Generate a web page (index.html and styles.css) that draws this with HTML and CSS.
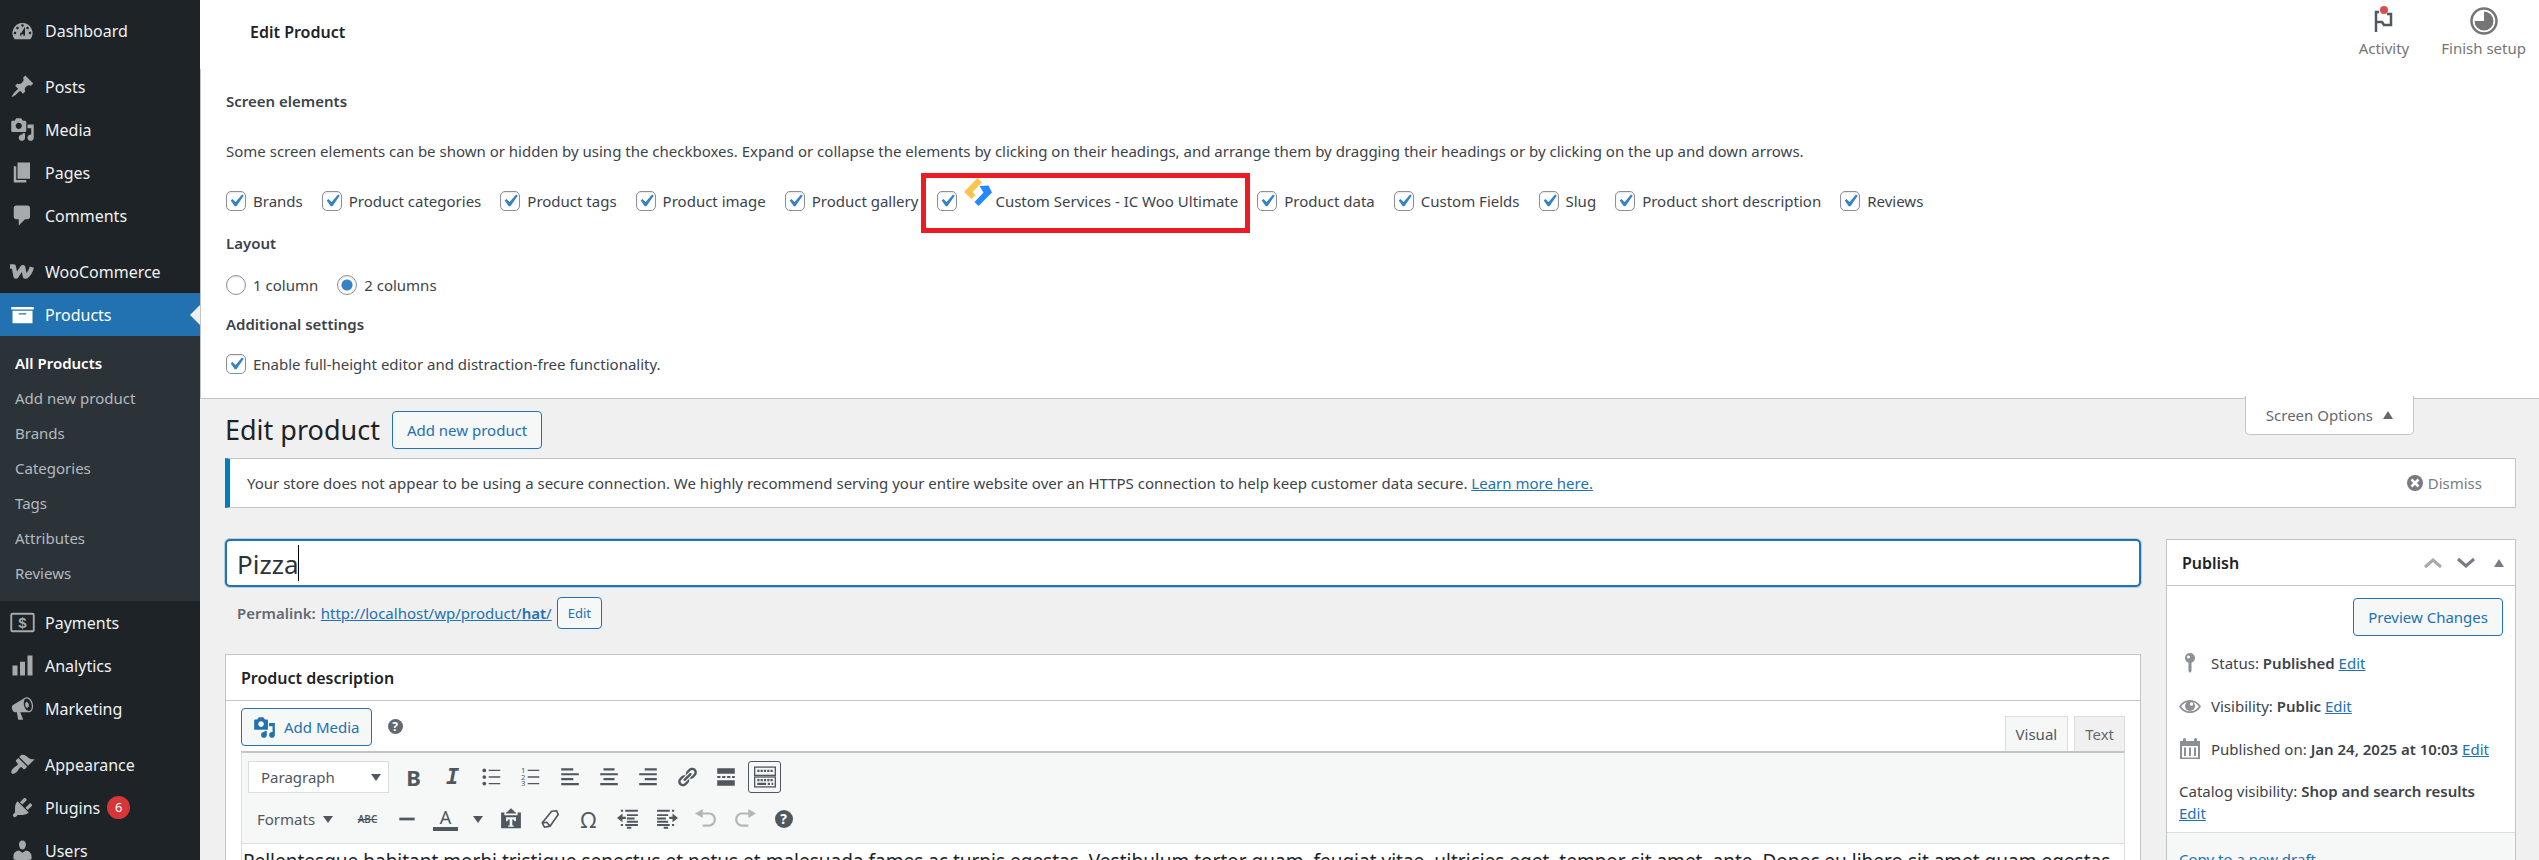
FILE: index.html
```html
<!DOCTYPE html>
<html lang="en">
<head>
  <meta charset="UTF-8" />
  <meta name="viewport" content="width=device-width, initial-scale=1.0"/>
  <title>Edit product</title>
  <link rel="stylesheet" href="styles.css">
</head>

<body>
  <!-- Admin menu -->
  <nav class="menu">
    <a class="menu-item" href="#">
      <svg class="icon" viewBox="0 0 20 20"><path d="M3.76 17h12.48A7.998 7.998 0 0 0 10 3.99 7.998 7.998 0 0 0 3.76 17zM10 5c.55 0 1 .45 1 1s-.45 1-1 1-1-.45-1-1 .45-1 1-1zM6 7c.55 0 1 .45 1 1s-.45 1-1 1-1-.45-1-1 .45-1 1-1zm8 0c.55 0 1 .45 1 1s-.45 1-1 1-1-.45-1-1 .45-1 1-1zm-5.37 5.55L12 7v6c0 1.1-.9 2-2 2s-2-.9-2-2c0-.57.24-1.08.63-1.45zM4 11c.55 0 1 .45 1 1s-.45 1-1 1-1-.45-1-1 .45-1 1-1zm12 0c.55 0 1 .45 1 1s-.45 1-1 1-1-.45-1-1 .45-1 1-1zm-5 3c0-.55-.45-1-1-1s-1 .45-1 1 .45 1 1 1 1-.45 1-1z"/></svg>
      Dashboard
    </a>
    <div class="menu-sep"></div>
    <a class="menu-item" href="#">
      <svg class="icon" viewBox="0 0 20 20"><path d="M10.44 3.02l1.82-1.82 6.36 6.35-1.83 1.82c-1.05-.68-2.48-.57-3.41.36l-.75.75c-.92.93-1.04 2.35-.35 3.41l-1.83 1.82-2.41-2.41-2.8 2.79c-.42.42-3.38 2.71-3.8 2.29s1.86-3.39 2.28-3.81l2.79-2.79L4.1 9.36l1.83-1.82c1.05.69 2.48.57 3.4-.36l.75-.75c.93-.92 1.05-2.35.36-3.41z"/></svg>
      Posts
    </a>
    <a class="menu-item" href="#">
      <svg class="icon" viewBox="0 0 20 20"><path d="M13 11V4c0-.55-.45-1-1-1h-1.67L9 1H5L3.67 3H2c-.55 0-1 .45-1 1v7c0 .55.45 1 1 1h10c.55 0 1-.45 1-1zM7 4.5c1.38 0 2.5 1.12 2.5 2.5S8.38 9.5 7 9.5 4.5 8.38 4.5 7 5.62 4.5 7 4.5zM14 6h5v10.5c0 1.38-1.12 2.5-2.5 2.5S14 17.88 14 16.5s1.12-2.5 2.5-2.5c.17 0 .34.02.5.05V9h-3V6zm-4 8.05V13h2v3.5c0 1.38-1.12 2.5-2.5 2.5S7 17.88 7 16.5 8.12 14 9.5 14c.17 0 .34.02.5.05z"/></svg>
      Media
    </a>
    <a class="menu-item" href="#">
      <svg class="icon" viewBox="0 0 20 20"><path d="M6 15V2h10v13H6zm-1 1h8v2H3V5h2v11z"/></svg>
      Pages
    </a>
    <a class="menu-item" href="#">
      <svg class="icon" viewBox="0 0 20 20"><path d="M5 2h9c1.1 0 2 .9 2 2v7c0 1.1-.9 2-2 2h-2l-5 5v-5H5c-1.1 0-2-.9-2-2V4c0-1.1.9-2 2-2z"/></svg>
      Comments
    </a>
    <div class="menu-sep"></div>
    <a class="menu-item" href="#">
      <svg class="icon woo" viewBox="0 0 20 20"><path d="M0 6h3l1.5 8h.5l5-7.500h.5l1.5 7.500h1c2-1.500 3.500-4 4.500-7.500"/></svg>
      WooCommerce
    </a>
    <a class="menu-item current" href="#">
      <svg class="icon" viewBox="0 0 20 20"><path d="M19 4v2H1V4h18zM2 7h16v10H2V7zm11 3V9H7v1h6z"/></svg>
      Products
    </a>
    <div class="submenu">
      <a class="active" href="#">All Products</a>
      <a href="#">Add new product</a>
      <a href="#">Brands</a>
      <a href="#">Categories</a>
      <a href="#">Tags</a>
      <a href="#">Attributes</a>
      <a href="#">Reviews</a>
    </div>
    <a class="menu-item" href="#">
      <svg class="icon" viewBox="0 0 20 20"><rect x="1" y="3" width="18" height="14" rx="1" fill="none" stroke="#a7aaad" stroke-width="1.5"/><text class="icon-text" x="10" y="14" font-size="12">$</text></svg>
      Payments
    </a>
    <a class="menu-item" href="#">
      <svg class="icon" viewBox="0 0 20 20"><path d="M18 18V2h-4v16h4zm-6 0V7H8v11h4zm-6 0v-8H2v8h4z"/></svg>
      Analytics
    </a>
    <a class="menu-item" href="#">
      <svg class="icon" viewBox="0 0 20 20"><path d="M18.15 5.94c.46 1.62.38 3.22-.02 4.48-.42 1.28-1.26 2.18-2.3 2.48-.16.06-.26.06-.4.06-.06.02-.12.02-.18.02-.06.02-.14.02-.22.02h-6.8l2.22 5.5c.02.14-.06.26-.14.34-.08.1-.24.16-.34.16H6.95c-.1 0-.26-.06-.34-.16-.08-.08-.16-.2-.14-.34l-1-5.5H4.25l-.02-.02c-.5.06-1.08-.18-1.54-.62s-.88-1.08-1.06-1.88c-.24-.8-.2-1.56-.02-2.2.18-.62.58-1.08 1.06-1.3l.02-.02 9-5.4c.1-.06.18-.1.24-.16.06-.04.14-.08.24-.12.16-.08.28-.12.5-.18 1.04-.3 2.24.1 3.22.98s1.84 2.24 2.26 3.86zm-2.58 5.98h-.02c.4-.1.74-.34 1.04-.7.58-.7.86-1.76.86-3.04 0-.64-.1-1.3-.28-1.98-.34-1.36-1.02-2.5-1.78-3.24s-1.68-1.1-2.46-.88c-.82.22-1.4.96-1.7 2-.32 1.04-.28 2.36.06 3.72.38 1.36 1 2.5 1.8 3.24.78.74 1.62 1.1 2.48.88zm-2.54-7.08c.22-.04.42-.02.62.04.38.16.76.48 1.02 1s.42 1.2.42 1.78c0 .3-.04.56-.12.8-.18.48-.44.84-.86.94-.34.1-.8-.06-1.14-.4s-.64-.86-.78-1.5c-.18-.62-.12-1.24.02-1.72s.48-.84.82-.94z"/></svg>
      Marketing
    </a>
    <div class="menu-sep"></div>
    <a class="menu-item" href="#">
      <svg class="icon" viewBox="0 0 20 20"><path d="M14.48 11.06L7.41 3.99l1.5-1.5c.5-.56 2.3-.47 3.51.32 1.21.8 1.43 1.28 2.91 2.1 1.18.64 2.45 1.26 4.45.85zm-.71.71L6.7 4.7 4.93 6.47c-.39.39-.39 1.02 0 1.41l1.06 1.06c.39.39.39 1.03 0 1.42-.6.6-1.43 1.11-2.21 1.69-.35.26-.7.53-1.01.84C1.43 14.23.4 16.08 1.4 17.07c.99 1 2.84-.03 4.18-1.36.31-.31.58-.66.85-1.02.57-.78 1.08-1.61 1.69-2.21.39-.39 1.02-.39 1.41 0l1.06 1.06c.39.39 1.02.39 1.41 0z"/></svg>
      Appearance
    </a>
    <a class="menu-item" href="#">
      <svg class="icon" viewBox="0 0 20 20"><path d="M13.11 4.36L9.87 7.6 8 5.73l3.24-3.24c.35-.34 1.05-.2 1.56.32.52.51.66 1.21.31 1.55zm-8 1.77l.91-1.12 9.01 9.01-1.19.84c-.71.71-2.63 1.16-3.82 1.16H6.14L4.9 17.26c-.59.59-1.54.59-2.12 0-.59-.58-.59-1.53 0-2.12l1.24-1.24v-3.88c0-1.13.4-3.19 1.09-3.89zm7.26 3.97l3.24-3.24c.34-.35 1.04-.21 1.55.31.52.51.66 1.21.31 1.55l-3.24 3.25z"/></svg>
      Plugins <span class="count">6</span>
    </a>
    <a class="menu-item" href="#">
      <svg class="icon" viewBox="0 0 20 20"><path d="M10 9.25c-2.27 0-2.73-3.44-2.73-3.44C7 4.02 7.82 2 9.97 2c2.16 0 2.98 2.02 2.71 3.81 0 0-.41 3.44-2.68 3.44zm0 2.57L12.72 10c2.39 0 4.52 2.33 4.52 4.53v2.49s-3.65 1.13-7.24 1.13c-3.65 0-7.24-1.13-7.24-1.13v-2.49c0-2.25 1.94-4.48 4.47-4.48z"/></svg>
      Users
    </a>
  </nav>

  <div class="content">
    <header class="topbar">
      <h2>Edit Product</h2>
      <button class="top-action" type="button">
        <svg viewBox="0 0 24 24"><path d="M4 23V3h3M15 5h4v11h-7l-2-3H4" fill="none" stroke="#50575e" stroke-width="2.5"/><circle cx="12" cy="1" r="4" fill="#d94f4f"/></svg>
        Activity
      </button>
      <button class="top-action" type="button">
        <svg viewBox="0 0 24 24"><circle cx="12" cy="12" r="12.5" fill="none" stroke="#757575" stroke-width="2.5"/><path d="M12 12V2.5A9.5 9.5 0 1 1 2.5 12z" fill="#757575"/></svg>
        Finish setup
      </button>
    </header>

    <!-- Screen options panel -->
    <form class="screen-meta">
      <fieldset class="elements">
        <legend>Screen elements</legend>
        <p>Some screen elements can be shown or hidden by using the checkboxes. Expand or collapse the elements by clicking on their headings, and arrange them by dragging their headings or by clicking on the up and down arrows.</p>
        <div class="options">
          <label><input type="checkbox" checked>Brands</label>
          <label><input type="checkbox" checked>Product categories</label>
          <label><input type="checkbox" checked>Product tags</label>
          <label><input type="checkbox" checked>Product image</label>
          <label><input type="checkbox" checked>Product gallery</label>
          <label class="highlight"><input type="checkbox" checked>
            <svg class="service-logo" viewBox="0 0 28 28"><path d="M13.5 0L18 4.5 8.5 14l3 3-4 4L0 14z" fill="#fdc54f"/><path d="M15.5 8l9-.5L28 14.5 14.5 28 10.5 24l9-9.5z" fill="#2688ff"/></svg>Custom Services - IC Woo Ultimate</label>
          <label><input type="checkbox" checked>Product data</label>
          <label><input type="checkbox" checked>Custom Fields</label>
          <label><input type="checkbox" checked>Slug</label>
          <label><input type="checkbox" checked>Product short description</label>
          <label><input type="checkbox" checked>Reviews</label>
        </div>
      </fieldset>
      <fieldset class="layout">
        <legend>Layout</legend>
        <div class="options">
          <label><input type="radio" name="columns">1 column</label>
          <label><input type="radio" name="columns" checked>2 columns</label>
        </div>
      </fieldset>
      <fieldset class="extra">
        <legend>Additional settings</legend>
        <div class="options">
          <label><input type="checkbox" checked>Enable full-height editor and distraction-free functionality.</label>
        </div>
      </fieldset>
    </form>

    <main class="wrap">
      <div class="heading">
        <h1>Edit product</h1>
        <a class="button" href="#">Add new product</a>
        <button class="screen-options" type="button">Screen Options <span class="tri up"></span></button>
      </div>

      <div class="notice">
        <p>Your store does not appear to be using a secure connection. We highly recommend serving your entire website over an HTTPS connection to help keep customer data secure. <a href="#">Learn more here.</a></p>
        <button class="dismiss" type="button">
          <svg viewBox="0 0 16 16"><circle cx="8" cy="8" r="8" fill="#787c82"/><path d="M4.5 4.5l7 7M11.5 4.5l-7 7" stroke="#fff" stroke-width="2.5"/></svg>
          Dismiss
        </button>
      </div>

      <div class="columns">
        <div class="main-col">
          <div class="title-box">
            <input class="title" type="text" value="Pizza" aria-label="Product name">
            <span class="caret"></span>
          </div>
          <div class="permalink">
            <strong>Permalink:</strong>
            <a href="#">http://localhost/wp/product/<b>hat</b>/</a>
            <button class="button small" type="button">Edit</button>
          </div>

          <section class="postbox">
            <h2 class="box-title">Product description</h2>
            <div class="editor">
              <div class="editor-tools">
                <button class="button media" type="button">
                  <svg viewBox="0 0 20 20"><path d="M13 11V4c0-.55-.45-1-1-1h-1.67L9 1H5L3.67 3H2c-.55 0-1 .45-1 1v7c0 .55.45 1 1 1h10c.55 0 1-.45 1-1zM7 4.5c1.38 0 2.5 1.12 2.5 2.5S8.38 9.5 7 9.5 4.5 8.38 4.5 7 5.62 4.5 7 4.5zM14 6h5v10.5c0 1.38-1.12 2.5-2.5 2.5S14 17.88 14 16.5s1.12-2.5 2.5-2.5c.17 0 .34.02.5.05V9h-3V6zm-4 8.05V13h2v3.5c0 1.38-1.12 2.5-2.5 2.5S7 17.88 7 16.5 8.12 14 9.5 14c.17 0 .34.02.5.05z" fill="currentColor"/></svg>
                  Add Media
                </button>
                <span class="help">?</span>
                <button class="tab on" type="button">Visual</button>
                <button class="tab" type="button">Text</button>
              </div>

              <div class="toolbar">
                <div class="tool-row">
                  <div class="format">
                    <select aria-label="Paragraph style"><option>Paragraph</option></select>
                    <span class="tri down"></span>
                  </div>
                  <button class="tool bold" type="button">B</button>
                  <button class="tool italic" type="button">I</button>
                  <button class="tool" type="button" aria-label="Bulleted list">
                    <svg viewBox="0 0 20 20"><g fill="#50575e" stroke="none"><circle cx="3" cy="4" r="1.7"/><circle cx="3" cy="10" r="1.7"/><circle cx="3" cy="16" r="1.7"/></g><path d="M7 4h10.5M7 10h10.5M7 16h10.5" stroke-width="1.2"/></svg>
                  </button>
                  <button class="tool" type="button" aria-label="Numbered list">
                    <svg viewBox="0 0 20 20"><text class="num" x="1" y="6.5">1</text><text class="num" x="1" y="12.5">2</text><text class="num" x="1" y="18.5">3</text><path d="M7 4h10.5M7 10h10.5M7 16h10.5" stroke-width="1.2"/></svg>
                  </button>
                  <button class="tool" type="button" aria-label="Align left">
                    <svg viewBox="0 0 20 20"><path d="M2 3h11M2 7.5h16M2 12h11M2 16.5h16"/></svg>
                  </button>
                  <button class="tool" type="button" aria-label="Align center">
                    <svg viewBox="0 0 20 20"><path d="M5 3h10M2 7.5h16M5 12h10M2 16.5h16"/></svg>
                  </button>
                  <button class="tool" type="button" aria-label="Align right">
                    <svg viewBox="0 0 20 20"><path d="M7 3h11M2 7.5h16M7 12h11M2 16.5h16"/></svg>
                  </button>
                  <button class="tool" type="button" aria-label="Link">
                    <svg class="solid" viewBox="0 0 20 20"><path d="M17.74 2.76c1.68 1.69 1.68 4.41 0 6.1l-1.53 1.52c-1.12 1.12-2.7 1.47-4.14 1.09l2.62-2.61.76-.77.76-.76c.84-.84.84-2.2 0-3.04-.84-.85-2.2-.85-3.04 0l-.77.76-3.38 3.38c-.37-1.44-.02-3.02 1.1-4.14l1.52-1.53c1.69-1.68 4.42-1.68 6.1 0zM8.59 13.43l5.34-5.34c.42-.42.42-1.1 0-1.52-.44-.43-1.13-.39-1.53 0l-5.33 5.34c-.42.42-.42 1.1 0 1.52.44.43 1.13.39 1.52 0zm-.76 2.29l4.14-4.15c.38 1.44.03 3.02-1.09 4.14l-1.52 1.53c-1.69 1.68-4.41 1.68-6.1 0-1.68-1.68-1.68-4.42 0-6.1l1.53-1.52c1.12-1.12 2.7-1.47 4.14-1.1l-4.14 4.15c-.85.84-.85 2.2 0 3.05.84.84 2.2.84 3.04 0z"/></svg>
                  </button>
                  <button class="tool" type="button" aria-label="Read more tag">
                    <svg class="solid" viewBox="0 0 20 20"><path d="M2 2h16v5H2zM2 9h3v2H2zM6.5 9h3v2h-3zM11 9h3v2h-3zM15.5 9H18v2h-2.5zM2 13h16v5H2z"/></svg>
                  </button>
                  <button class="tool pressed" type="button" aria-label="Toolbar toggle">
                    <svg viewBox="0 0 20 20"><g stroke-width="1.2"><rect x=".6" y="1" width="18.8" height="7.5"/><rect x=".6" y="10" width="18.8" height="9"/></g><path d="M3 4.5h14M3 12.8h14" stroke-dasharray="2 1"/><path d="M3 16.2h8M12.5 16.2h2M16 16.2h1.5"/></svg>
                  </button>
                </div>
                <div class="tool-row">
                  <button class="formats" type="button">Formats <span class="tri down"></span></button>
                  <button class="tool strike" type="button">ABC</button>
                  <button class="tool" type="button" aria-label="Horizontal line">
                    <svg viewBox="0 0 20 20"><path d="M3 10h14" stroke-width="2.5"/></svg>
                  </button>
                  <button class="tool color" type="button"><span>A</span></button>
                  <button class="tool narrow" type="button" aria-label="Text colours"><span class="tri down"></span></button>
                  <button class="tool" type="button" aria-label="Paste as text">
                    <svg class="solid" viewBox="0 0 20 20"><path d="M12.5 3L12 1.5h-1a1 1 0 0 0-2 0H8L7.5 3 5.5 4v1h9V4zM1 4h3v2.5h12V4h3v14.5H1zM5.5 8.5V12h1.2l.8-1.5h1.3V16H7.5v1h5v-1h-1.3v-5.5h1.3l.8 1.5h1.2V8.5z" fill-rule="evenodd"/></svg>
                  </button>
                  <button class="tool" type="button" aria-label="Clear formatting">
                    <svg viewBox="0 0 20 20"><path d="M11.5 3l4.500-.5 1.5 3.500-7.500 10.500-5 1-2-4z" stroke-width="1.5" stroke-linejoin="round"/><path d="M3.5 13.5l3.500-.5 3 3.500" stroke-width="1.5"/></svg>
                  </button>
                  <button class="tool omega" type="button">Ω</button>
                  <button class="tool" type="button" aria-label="Decrease indent">
                    <svg viewBox="0 0 20 20"><path d="M3.5 2.5h2M7.5 2.5H19M9 6.5h10M9 9.5h7M9 12.5h10M3.5 15.5h2M7.5 15.5H19M9 18h4" stroke-width="1.7"/><path d="M0 9l5-4v3h3v2H5v3z" class="fill"/></svg>
                  </button>
                  <button class="tool" type="button" aria-label="Increase indent">
                    <svg viewBox="0 0 20 20"><path d="M1 2.5h11.5M14.5 2.5h2M1 6.5h10M1 9.5h8M1 12.5h10M1 15.5h11.5M14.5 15.5h2M7 18h4" stroke-width="1.7"/><path d="M20 9l-5-4v3h-3v2h3v3z" class="fill"/></svg>
                  </button>
                  <button class="tool faded" type="button" aria-label="Undo">
                    <svg viewBox="0 0 20 20"><path d="M6 5h7a5 5.5 0 0 1 0 11H7"/><path d="M0 5l7-4v8z" class="fill"/></svg>
                  </button>
                  <button class="tool faded" type="button" aria-label="Redo">
                    <svg viewBox="0 0 20 20"><path d="M14 5H7a5 5.5 0 0 0 0 11h6"/><path d="M20 5l-7-4v8z" class="fill"/></svg>
                  </button>
                  <button class="tool" type="button"><span class="help large">?</span></button>
                </div>
              </div>
              <div class="editor-body">
                <p>Pellentesque habitant morbi tristique senectus et netus et malesuada fames ac turpis egestas. Vestibulum tortor quam, feugiat vitae, ultricies eget, tempor sit amet, ante. Donec eu libero sit amet quam egestas</p>
              </div>
            </div>
          </section>
        </div>

        <aside class="side-col">
          <section class="postbox">
            <h2 class="box-title">Publish
              <span class="handles">
                <svg viewBox="0 0 18 18"><path d="M1 13l8-7 8 7" stroke="#a7aaad"/></svg>
                <svg viewBox="0 0 18 18"><path d="M1 5l8 7 8-7" stroke="#787c82"/></svg>
                <span class="tri up"></span>
              </span>
            </h2>
            <div class="publish">
              <button class="button preview" type="button">Preview Changes</button>
              <p class="pub-row">
                <svg viewBox="0 0 22 22"><circle cx="11" cy="6" r="5"/><path d="M9.5 10h3v9l-1.5 2-1.5-2z"/><circle cx="9.5" cy="5" r="1.5" fill="#fff"/></svg>
                <span>Status: <b>Published</b> <a href="#">Edit</a></span>
              </p>
              <p class="pub-row">
                <svg viewBox="0 0 22 22"><path d="M1 11.5c5-7.5 15-7.5 20 0-5 7.5-15 7.5-20 0z" fill="none" stroke="#8c8f94" stroke-width="1.7"/><circle cx="11" cy="11" r="5"/><circle cx="12.5" cy="9" r="1.7" fill="#fff"/></svg>
                <span>Visibility: <b>Public</b> <a href="#">Edit</a></span>
              </p>
              <p class="pub-row">
                <svg viewBox="0 0 22 22"><path d="M1 3h3V1.5a1.5 1.5 0 0 1 3 0V3h8V1.5a1.5 1.5 0 0 1 3 0V3h3v18H1zM3 8v11.5h16V8z" fill-rule="evenodd"/><path d="M5 9.5h2V18H5zM10 9.5h2V18h-2zM15 9.5h2V18h-2z"/></svg>
                <span>Published on: <b>Jan 24, 2025 at 10:03</b> <a href="#">Edit</a></span>
              </p>
              <p class="catalog">Catalog visibility: <b>Shop and search results</b> <a href="#">Edit</a></p>
            </div>
            <div class="major"><a href="#">Copy to a new draft</a></div>
          </section>
        </aside>
      </div>
    </main>
  </div>
</body>
</html>
```

FILE: styles.css
```css
* {
  margin: 0;
  padding: 0;
  box-sizing: border-box;
}
body {
  display: flex;
  height: 100vh;
  overflow: hidden;
  background: #f0f0f1;
  color: #3c434a;
  font-family: "Noto Sans", "Open Sans", sans-serif;
  font-size: 15px;
  line-height: 24px;
}
button, input, select {
  font: inherit;
  color: inherit;
}
button {
  background: none;
  border: 0;
}
a {
  color: #2271b1;
}
b, strong {
  font-weight: 600;
}

/* Admin menu */
.menu {
  flex: 0 0 200px;
  padding-top: 9px;
  background: #1d2327;
  overflow: hidden;
}
.menu-item {
  position: relative;
  display: flex;
  align-items: center;
  height: 43px;
  padding-left: 10px;
  color: #f0f0f1;
  font-size: 16px;
  text-decoration: none;
}
.menu-sep {
  height: 13px;
}
.icon {
  width: 25px;
  height: 25px;
  margin-right: 10px;
  fill: #a7aaad;
}
.woo {
  fill: none;
  stroke: #a7aaad;
  stroke-width: 3.5;
  stroke-linejoin: round;
}
.icon-text {
  font-family: "Liberation Sans", Arial, sans-serif;
  font-weight: bold;
  text-anchor: middle;
}
.menu-item.current {
  background: #2271b1;
  color: #fff;
}
.current .icon {
  fill: #fff;
}
.current::after {
  content: "";
  position: absolute;
  right: 0;
  border: 10px solid transparent;
  border-left-width: 0;
  border-right-color: #f0f0f1;
}
.count {
  width: 23px;
  margin-left: 7px;
  border-radius: 50%;
  background: #d63638;
  color: #fff;
  font-size: 13px;
  line-height: 23px;
  text-align: center;
}
.submenu {
  padding: 10px 0;
  background: #2c3338;
}
.submenu a {
  display: block;
  padding-left: 15px;
  color: #b4b9be;
  line-height: 35px;
  text-decoration: none;
}
.submenu .active {
  color: #fff;
  font-weight: 600;
}

.content {
  flex: 1;
  min-width: 0;
}

/* Top bar */
.topbar {
  display: flex;
  gap: 32px;
  height: 69px;
  padding: 0 13px 0 50px;
  background: #fff;
}
.topbar h2 {
  flex: 1;
  color: #1d2327;
  font-size: 16px;
  font-weight: 600;
  line-height: 64px;
}
.top-action {
  display: flex;
  flex-direction: column;
  align-items: center;
  gap: 3px;
  padding-top: 9px;
  color: #757575;
}
.top-action svg {
  width: 24px;
  height: 24px;
  overflow: visible;
}

/* Screen options */
.screen-meta {
  padding: 20px 25px 22px;
  background: #fff;
  border-left: 1px solid #c3c4c7;
  border-bottom: 1px solid #c3c4c7;
}
fieldset {
  border: 0;
}
legend {
  font-weight: 600;
}
.elements p,
.elements .options {
  margin-top: 26px;
}
.layout,
.layout .options {
  margin-top: 18px;
}
.extra {
  margin-top: 15px;
}
.extra .options {
  margin-top: 16px;
}
.options {
  display: flex;
  flex-wrap: wrap;
  gap: 0 19px;
}
.options label {
  display: flex;
  align-items: center;
}
input[type="checkbox"],
input[type="radio"] {
  appearance: none;
  width: 20px;
  height: 20px;
  margin-right: 7px;
  border: 1px solid #8c8f94;
  border-radius: 5px;
  background: #fff;
  box-shadow: inset 0 1px 2px rgba(0, 0, 0, 0.1);
}
input[type="checkbox"]:checked {
  background: #fff url("data:image/svg+xml,%3Csvg xmlns='http://www.w3.org/2000/svg' viewBox='0 0 20 20'%3E%3Cpath d='M14.83 4.89l1.34.94-5.81 8.38H9.02L5.78 9.67l1.34-1.25 2.57 2.4z' fill='%233582c4'/%3E%3C/svg%3E") center / 25px no-repeat;
}
input[type="radio"] {
  border-radius: 50%;
}
input[type="radio"]:checked {
  background: radial-gradient(circle, #3582c4 5px, #fff 6px);
}
.service-logo {
  width: 28px;
  height: 28px;
  margin: -18px 3px 0 0;
}
.highlight {
  position: relative;
}
.highlight::after {
  content: "";
  position: absolute;
  inset: -16px -12px -20px -16px;
  border: 5px solid #ed1c24;
}

/* Page heading */
.wrap {
  padding: 0 23px 0 25px;
}
.heading {
  display: flex;
  align-items: flex-start;
  height: 59px;
}
h1 {
  margin: 12px 12px 0 0;
  color: #1d2327;
  font-size: 27px;
  font-weight: 400;
  line-height: 38px;
}
.button {
  display: inline-flex;
  align-items: center;
  height: 38px;
  padding: 0 14px;
  border: 1px solid #2271b1;
  border-radius: 4px;
  background: #f6f7f7;
  color: #2271b1;
  text-decoration: none;
}
.heading .button {
  margin-top: 12px;
}
.screen-options {
  display: flex;
  align-items: center;
  gap: 10px;
  height: 39px;
  margin: -3px 102px 0 auto;
  padding: 0 20px;
  border: 1px solid #c3c4c7;
  border-top: 0;
  border-radius: 0 0 5px 5px;
  background: #fff;
  color: #646970;
}
.tri {
  border: 5px solid transparent;
}
.tri.up {
  border-top-width: 0;
  border-bottom: 8px solid #646970;
}
.tri.down {
  border-top: 7px solid #50575e;
  border-bottom-width: 0;
}

.notice {
  display: flex;
  align-items: center;
  justify-content: space-between;
  height: 50px;
  padding: 0 33px 0 17px;
  border: 1px solid #c3c4c7;
  border-left: 5px solid #007cba;
  background: #fff;
}
.dismiss {
  display: flex;
  align-items: center;
  gap: 5px;
  color: #787c82;
}
.dismiss svg {
  width: 16px;
  height: 16px;
}

/* Two column layout */
.columns {
  display: flex;
  align-items: flex-start;
  gap: 25px;
  margin-top: 31px;
}
.main-col {
  flex: 1;
  min-width: 0;
}
.side-col {
  flex: 0 0 350px;
}
.title-box {
  position: relative;
}
.title {
  display: block;
  width: 100%;
  height: 48px;
  padding: 2px 10px 0;
  border: 2px solid #2271b1;
  border-radius: 5px;
  outline: 0;
  background: #fff;
  box-shadow: 0 0 0 1px #b5cfe4;
  color: #2c3338;
  font-size: 26px;
}
.caret {
  position: absolute;
  top: 6px;
  left: 73px;
  width: 1px;
  height: 36px;
  background: #000;
}
.permalink {
  display: flex;
  align-items: center;
  gap: 5px;
  padding: 10px 0 25px 12px;
  color: #646970;
}
.button.small {
  height: 32px;
  padding: 0 10px;
  font-size: 13px;
}

.postbox {
  border: 1px solid #c3c4c7;
  background: #fff;
}
.box-title {
  display: flex;
  align-items: center;
  justify-content: space-between;
  height: 46px;
  padding: 0 11px 0 15px;
  border-bottom: 1px solid #c3c4c7;
  color: #1d2327;
  font-size: 16px;
  font-weight: 600;
}
.handles {
  display: flex;
  align-items: center;
  gap: 15px;
}
.handles svg {
  width: 18px;
  height: 18px;
  fill: none;
  stroke-width: 3;
}
.handles .tri {
  margin-left: 4px;
  border-bottom-color: #787c82;
}

/* Editor */
.editor {
  padding: 7px 15px 0;
}
.editor-tools {
  display: flex;
  align-items: flex-start;
  height: 43px;
}
.button.media {
  gap: 8px;
  padding: 0 11px;
}
.media svg {
  width: 23px;
  height: 23px;
}
.help {
  width: 15px;
  margin: 11px auto 0 16px;
  border-radius: 50%;
  background: #646970;
  color: #fff;
  font-size: 12px;
  font-weight: 700;
  line-height: 15px;
  text-align: center;
}
.help.large {
  width: 18px;
  margin: 0;
  background: #50575e;
  font-size: 14px;
  line-height: 18px;
}
.tab {
  align-self: flex-end;
  height: 35px;
  margin-left: 6px;
  padding: 0 10px;
  border: 1px solid #dcdcde;
  border-bottom: 0;
  background: #f0f0f1;
  color: #646970;
}
.tab.on {
  background: #f6f7f7;
  color: #50575e;
}
.toolbar {
  display: flex;
  flex-direction: column;
  gap: 10px;
  padding: 8px 6px;
  border: 1px solid #dcdcde;
  border-top: 2px solid #c3c4c7;
  background: #f6f7f7;
}
.tool-row {
  display: flex;
  gap: 6px;
  height: 32px;
}
.format {
  position: relative;
  width: 141px;
  margin-right: 2px;
}
.format select {
  appearance: none;
  width: 100%;
  height: 32px;
  padding: 0 12px;
  border: 1px solid #dcdcde;
  background: #fff;
  color: #50575e;
}
.format .tri {
  position: absolute;
  top: 13px;
  right: 8px;
}
.tool {
  display: flex;
  align-items: center;
  justify-content: center;
  width: 33px;
  color: #50575e;
}
.tool svg {
  width: 22px;
  height: 22px;
  fill: none;
  stroke: #50575e;
  stroke-width: 2;
}
.tool .solid,
.tool .fill {
  fill: #50575e;
  stroke: none;
}
.tool .num {
  fill: #50575e;
  stroke: none;
  font-size: 7px;
}
.tool.pressed {
  border: 1px solid #50575e;
  border-radius: 3px;
}
.tool.faded {
  opacity: 0.4;
}
.tool.narrow {
  width: 20px;
}
.bold {
  font-size: 22px;
  font-weight: 700;
}
.italic {
  font-family: "DejaVu Sans Mono", monospace;
  font-size: 22px;
  font-style: italic;
  font-weight: 700;
}
.formats {
  display: flex;
  align-items: center;
  gap: 8px;
  width: 97px;
  padding-left: 9px;
  color: #50575e;
}
.strike {
  font-size: 10px;
  font-weight: 600;
  text-decoration: line-through;
}
.color span {
  width: 25px;
  border-bottom: 4px solid #50575e;
  font-size: 18px;
  line-height: 20px;
}
.omega {
  font-size: 22px;
}
.editor-body {
  padding: 2px 1px;
  border: 1px solid #dcdcde;
  border-top: 0;
  color: #1d2327;
  font-size: 19px;
  line-height: 30px;
}

/* Publish box */
.publish {
  display: flex;
  flex-direction: column;
  padding: 12px 12px 8px;
}
.preview {
  align-self: flex-end;
  margin-bottom: 5px;
}
.pub-row {
  display: flex;
  align-items: center;
  gap: 10px;
  height: 43px;
}
.pub-row svg {
  width: 22px;
  height: 22px;
  fill: #8c8f94;
}
.catalog {
  padding: 10px 20px 0 0;
  line-height: 22px;
}
.major {
  padding: 14px 12px;
  border-top: 1px solid #dcdcde;
  background: #f6f7f7;
}
.major a {
  text-decoration: none;
}
```
